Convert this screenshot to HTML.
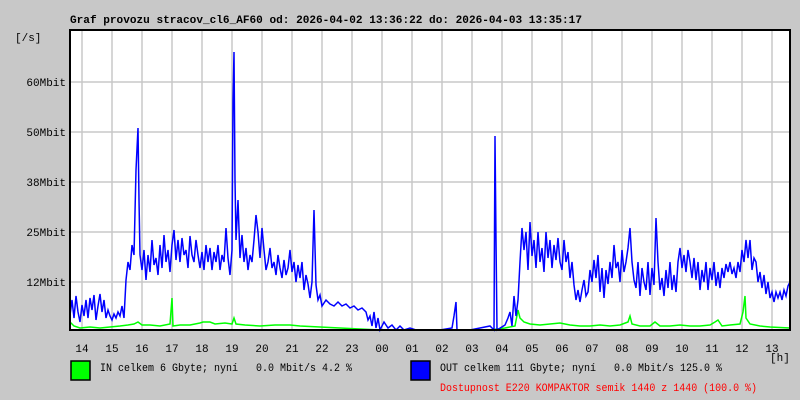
<!DOCTYPE html>
<html><head><meta charset="utf-8"><style>
body{margin:0;background:#c8c8c8;width:800px;height:400px;overflow:hidden;font-family:"Liberation Mono",monospace;}
svg{position:absolute;left:0;top:0}
text{white-space:pre}
</style></head><body>
<svg width="800" height="400" xmlns="http://www.w3.org/2000/svg" font-family="Liberation Mono, monospace" font-size="11" xml:space="preserve">
<rect x="70" y="30" width="720" height="300" fill="#fff"/>
<g stroke="#c8c8c8" stroke-width="1.5">
<line x1="82" y1="30" x2="82" y2="330"/><line x1="112" y1="30" x2="112" y2="330"/><line x1="142" y1="30" x2="142" y2="330"/><line x1="172" y1="30" x2="172" y2="330"/><line x1="202" y1="30" x2="202" y2="330"/><line x1="232" y1="30" x2="232" y2="330"/><line x1="262" y1="30" x2="262" y2="330"/><line x1="292" y1="30" x2="292" y2="330"/><line x1="322" y1="30" x2="322" y2="330"/><line x1="352" y1="30" x2="352" y2="330"/><line x1="382" y1="30" x2="382" y2="330"/><line x1="412" y1="30" x2="412" y2="330"/><line x1="442" y1="30" x2="442" y2="330"/><line x1="472" y1="30" x2="472" y2="330"/><line x1="502" y1="30" x2="502" y2="330"/><line x1="532" y1="30" x2="532" y2="330"/><line x1="562" y1="30" x2="562" y2="330"/><line x1="592" y1="30" x2="592" y2="330"/><line x1="622" y1="30" x2="622" y2="330"/><line x1="652" y1="30" x2="652" y2="330"/><line x1="682" y1="30" x2="682" y2="330"/><line x1="712" y1="30" x2="712" y2="330"/><line x1="742" y1="30" x2="742" y2="330"/><line x1="772" y1="30" x2="772" y2="330"/>
<line x1="70" y1="82" x2="790" y2="82"/><line x1="70" y1="132" x2="790" y2="132"/><line x1="70" y1="182" x2="790" y2="182"/><line x1="70" y1="232" x2="790" y2="232"/><line x1="70" y1="282" x2="790" y2="282"/>
</g>
<polyline fill="none" stroke="#00ff00" stroke-width="1.5" points="70,322 74,326 80,328 90,327 100,328 110,327 120,326 128,325 134,324 138,322 142,325 150,325 160,326 170,324 172,298 173,326 180,325 190,325 200,323 203,322 210,322 215,324 225,323 232,324 234,318 236,324 245,325 260,326 275,325 290,325 300,326 320,327 340,328 360,329 380,330 400,330 430,330 460,330 490,330 505,328 515,326 518,310 520,318 524,322 530,324 540,325 550,324 560,323 570,325 580,326 590,326 600,325 610,326 620,325 628,322 630,316 632,324 640,326 650,326 655,322 660,326 670,326 680,325 690,326 700,326 710,325 715,322 718,320 722,326 730,325 740,324 743,312 745,296 746,318 750,324 760,326 770,327 790,328"/>
<polyline fill="none" stroke="#0000ff" stroke-width="1.5" points="70,315 72,300 74,318 76,296 78,312 80,322 82,305 84,316 86,300 88,318 90,298 92,310 94,295 96,320 98,306 100,294 102,312 104,300 106,318 108,310 110,316 112,320 114,314 116,318 118,312 120,316 122,306 124,318 126,280 128,262 130,270 132,245 134,255 136,170 138,128 139,200 140,255 142,270 144,250 146,280 148,255 150,272 152,240 154,265 156,258 158,275 160,245 162,268 164,235 166,262 168,250 170,272 172,245 174,230 176,260 178,240 180,262 182,238 184,255 186,250 188,268 190,236 192,255 194,262 196,240 198,255 200,268 202,252 204,270 206,245 208,262 210,248 212,270 214,252 216,262 218,245 220,270 222,255 224,262 226,228 228,258 230,275 232,250 233,100 234,52 235,180 236,240 238,200 240,258 242,235 244,262 246,248 248,270 250,255 252,262 254,240 256,215 258,232 260,258 262,228 264,250 266,270 268,262 270,248 272,268 274,262 276,275 278,255 280,268 282,278 284,260 286,275 288,268 290,250 292,272 294,262 296,282 298,265 300,278 302,262 304,290 306,275 308,284 310,298 312,282 314,210 316,285 318,300 320,295 322,306 326,300 330,304 334,306 338,302 342,306 346,304 350,308 354,306 358,310 362,308 366,312 368,320 370,316 372,326 374,312 376,328 378,318 380,330 384,322 388,328 392,325 396,330 400,326 404,330 410,328 416,330 440,330 452,328 454,316 456,302 457,330 470,330 480,328 490,326 494,330 495,136 496,240 497,330 505,325 508,318 510,312 512,326 514,296 516,316 518,300 520,262 522,228 524,250 526,232 528,270 530,222 532,256 534,240 536,268 538,232 540,262 542,248 544,272 546,232 548,258 550,240 552,268 554,245 556,260 558,238 560,262 562,270 564,240 566,262 568,252 570,278 572,262 574,285 576,300 578,290 580,302 582,290 584,280 586,296 588,292 590,270 592,282 594,260 596,278 598,255 600,292 602,268 604,298 606,270 608,284 610,262 612,278 614,245 616,268 618,262 620,282 622,250 624,272 626,262 628,248 630,228 632,262 634,280 636,288 638,262 640,296 642,268 644,282 646,290 648,262 650,295 652,268 654,285 656,218 658,262 660,290 662,278 664,296 666,270 668,288 670,262 672,290 674,275 676,292 678,262 680,248 682,268 684,255 686,272 688,250 690,262 692,278 694,258 696,280 698,262 700,290 702,270 704,282 706,262 708,290 710,268 712,280 714,262 716,286 718,272 720,288 722,268 724,278 726,264 728,272 730,262 732,274 734,268 736,278 738,262 740,272 742,250 744,262 746,240 748,258 750,240 752,270 754,258 756,262 758,282 760,272 762,288 764,275 766,294 768,282 770,298 772,292 774,302 776,292 778,298 780,292 782,300 784,290 786,296 788,286 790,282"/>
<rect x="70" y="30" width="720" height="300" fill="none" stroke="#000" stroke-width="2"/>
<g fill="#000">
<text x="70" y="23" font-weight="bold" textLength="512" lengthAdjust="spacingAndGlyphs">Graf provozu stracov_cl6_AF60 od: 2026-04-02 13:36:22 do: 2026-04-03 13:35:17</text>
<text x="15" y="41">[/s]</text>
<text x="66" y="86" text-anchor="end">60Mbit</text>
<text x="66" y="136" text-anchor="end">50Mbit</text>
<text x="66" y="186" text-anchor="end">38Mbit</text>
<text x="66" y="236" text-anchor="end">25Mbit</text>
<text x="66" y="286" text-anchor="end">12Mbit</text>
<g text-anchor="middle">
<text x="82" y="352">14</text><text x="112" y="352">15</text><text x="142" y="352">16</text><text x="172" y="352">17</text><text x="202" y="352">18</text><text x="232" y="352">19</text><text x="262" y="352">20</text><text x="292" y="352">21</text><text x="322" y="352">22</text><text x="352" y="352">23</text><text x="382" y="352">00</text><text x="412" y="352">01</text><text x="442" y="352">02</text><text x="472" y="352">03</text><text x="502" y="352">04</text><text x="532" y="352">05</text><text x="562" y="352">06</text><text x="592" y="352">07</text><text x="622" y="352">08</text><text x="652" y="352">09</text><text x="682" y="352">10</text><text x="712" y="352">11</text><text x="742" y="352">12</text><text x="772" y="352">13</text>
</g>
<text x="770" y="361">[h]</text>
<text x="100" y="371" textLength="252" lengthAdjust="spacingAndGlyphs">IN celkem 6 Gbyte; nyní   0.0 Mbit/s 4.2 %</text>
<text x="440" y="371" textLength="282" lengthAdjust="spacingAndGlyphs">OUT celkem 111 Gbyte; nyní   0.0 Mbit/s 125.0 %</text>
</g>
<rect x="71" y="361" width="19" height="19" fill="#00ff00" stroke="#000" stroke-width="1.5"/>
<rect x="411" y="361" width="19" height="19" fill="#0000ff" stroke="#000" stroke-width="1.5"/>
<text x="440" y="391" fill="#ff0000" textLength="317" lengthAdjust="spacingAndGlyphs">Dostupnost E220 KOMPAKTOR semik 1440 z 1440 (100.0 %)</text>
</svg>
</body></html>
